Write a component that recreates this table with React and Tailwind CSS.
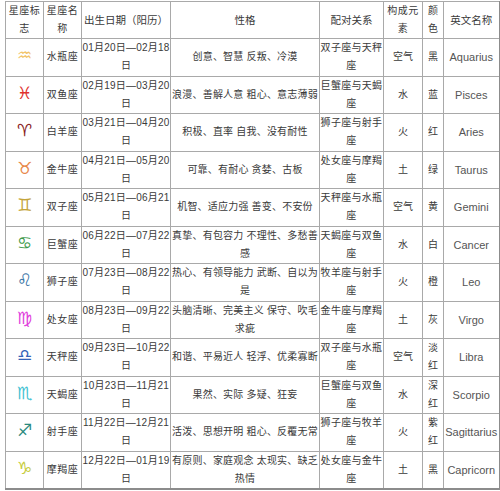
import React from 'react';

const rows = [
  { sign: '♒', color: '#f2c46a', name: '水瓶座', date: ['01月20日—02月18', '日'], trait: ['创意、智慧 反叛、冷漠'], pair: ['双子座与天秤', '座'], element: '空气', hue: ['黑'], en: 'Aquarius' },
  { sign: '♓', color: '#e0302c', name: '双鱼座', date: ['02月19日—03月20', '日'], trait: ['浪漫、善解人意 粗心、意志薄弱'], pair: ['巨蟹座与天蝎', '座'], element: '水', hue: ['蓝'], en: 'Pisces' },
  { sign: '♈', color: '#8a1e1e', name: '白羊座', date: ['03月21日—04月20', '日'], trait: ['积极、直率 自我、没有耐性'], pair: ['狮子座与射手', '座'], element: '火', hue: ['红'], en: 'Aries' },
  { sign: '♉', color: '#e8884a', name: '金牛座', date: ['04月21日—05月20', '日'], trait: ['可靠、有耐心 贪婪、古板'], pair: ['处女座与摩羯', '座'], element: '土', hue: ['绿'], en: 'Taurus' },
  { sign: '♊', color: '#c4a43a', name: '双子座', date: ['05月21日—06月21', '日'], trait: ['机智、适应力强 善变、不安份'], pair: ['天秤座与水瓶', '座'], element: '空气', hue: ['黄'], en: 'Gemini' },
  { sign: '♋', color: '#3c9a4a', name: '巨蟹座', date: ['06月22日—07月22', '日'], trait: ['真挚、有包容力 不理性、多愁善', '感'], pair: ['天蝎座与双鱼', '座'], element: '水', hue: ['白'], en: 'Cancer' },
  { sign: '♌', color: '#3a74a6', name: '狮子座', date: ['07月23日—08月22', '日'], trait: ['热心、有领导能力 武断、自以为', '是'], pair: ['牧羊座与射手', '座'], element: '火', hue: ['橙'], en: 'Leo' },
  { sign: '♍', color: '#e040dc', name: '处女座', date: ['08月23日—09月22', '日'], trait: ['头脑清晰、完美主义 保守、吹毛', '求疵'], pair: ['金牛座与摩羯', '座'], element: '土', hue: ['灰'], en: 'Virgo' },
  { sign: '♎', color: '#3464b8', name: '天秤座', date: ['09月23日—10月22', '日'], trait: ['和谐、平易近人 轻浮、优柔寡断'], pair: ['双子座与水瓶', '座'], element: '空气', hue: ['淡', '红'], en: 'Libra' },
  { sign: '♏', color: '#42c2d2', name: '天蝎座', date: ['10月23日—11月21', '日'], trait: ['果然、实际 多疑、狂妄'], pair: ['巨蟹座与双鱼', '座'], element: '水', hue: ['深', '红'], en: 'Scorpio' },
  { sign: '♐', color: '#2a8a7e', name: '射手座', date: ['11月22日—12月21', '日'], trait: ['活泼、思想开明 粗心、反覆无常'], pair: ['狮子座与牧羊', '座'], element: '火', hue: ['紫', '红'], en: 'Sagittarius' },
  { sign: '♑', color: '#c6cc3c', name: '摩羯座', date: ['12月22日—01月19', '日'], trait: ['有原则、家庭观念 太现实、缺乏', '热情'], pair: ['处女座与金牛', '座'], element: '土', hue: ['黑'], en: 'Capricorn' },
];

const cell = 'border border-[#a9a9a9] text-center align-middle p-0 whitespace-nowrap overflow-hidden';

function Lines({ parts }) {
  return parts.map((p, i) => (
    <React.Fragment key={i}>
      {i > 0 && <br />}
      {p}
    </React.Fragment>
  ));
}

export default function App() {
  return (
    <div className="w-[500px] h-[491px] bg-white pl-[5px] pt-[1px]" style={{ fontFamily: '"Liberation Sans", "Noto Sans CJK SC", sans-serif' }}>
      <table className="table-fixed border-collapse w-[494px] text-[10px] leading-[18px] text-[#3a3a3a] border-r-2 border-b-2 border-[#8c8c8c]">
        <colgroup>
          <col className="w-[38px]" />
          <col className="w-[38px]" />
          <col className="w-[89px]" />
          <col className="w-[149px]" />
          <col className="w-[64px]" />
          <col className="w-[39px]" />
          <col className="w-[21px]" />
          <col className="w-[56px]" />
        </colgroup>
        <thead>
          <tr className="h-[37px]">
            <th className={`${cell} font-normal tracking-[0.5px]`}>星座标<br />志</th>
            <th className={`${cell} font-normal tracking-[0.5px]`}>星座名<br />称</th>
            <th className={`${cell} font-normal text-[10.5px]`}>出生日期（阳历）</th>
            <th className={`${cell} font-normal text-[10.5px]`}>性格</th>
            <th className={`${cell} font-normal text-[10.5px]`}>配对关系</th>
            <th className={`${cell} font-normal tracking-[0.5px]`}>构成元<br />素</th>
            <th className={`${cell} font-normal`}>颜<br />色</th>
            <th className={`${cell} font-normal text-[10.5px]`}>英文名称</th>
          </tr>
        </thead>
        <tbody>
          {rows.map((r) => (
            <tr key={r.en} className="h-[37.5px]">
              <td className={cell}>
                <span className="text-[17px] leading-none" style={{ color: r.color, fontFamily: '"DejaVu Sans", sans-serif' }}>
                  {r.sign + '\uFE0E'}
                </span>
              </td>
              <td className={`${cell} tracking-[0.5px]`}>{r.name}</td>
              <td className={`${cell} tracking-[0.2px]`}><Lines parts={r.date} /></td>
              <td className={`${cell} tracking-[0.2px]`}><Lines parts={r.trait} /></td>
              <td className={`${cell} tracking-[0.3px]`}><Lines parts={r.pair} /></td>
              <td className={cell}>{r.element}</td>
              <td className={cell}><Lines parts={r.hue} /></td>
              <td className={`${cell} text-[11px] text-[#555]`}>{r.en}</td>
            </tr>
          ))}
        </tbody>
      </table>
    </div>
  );
}
